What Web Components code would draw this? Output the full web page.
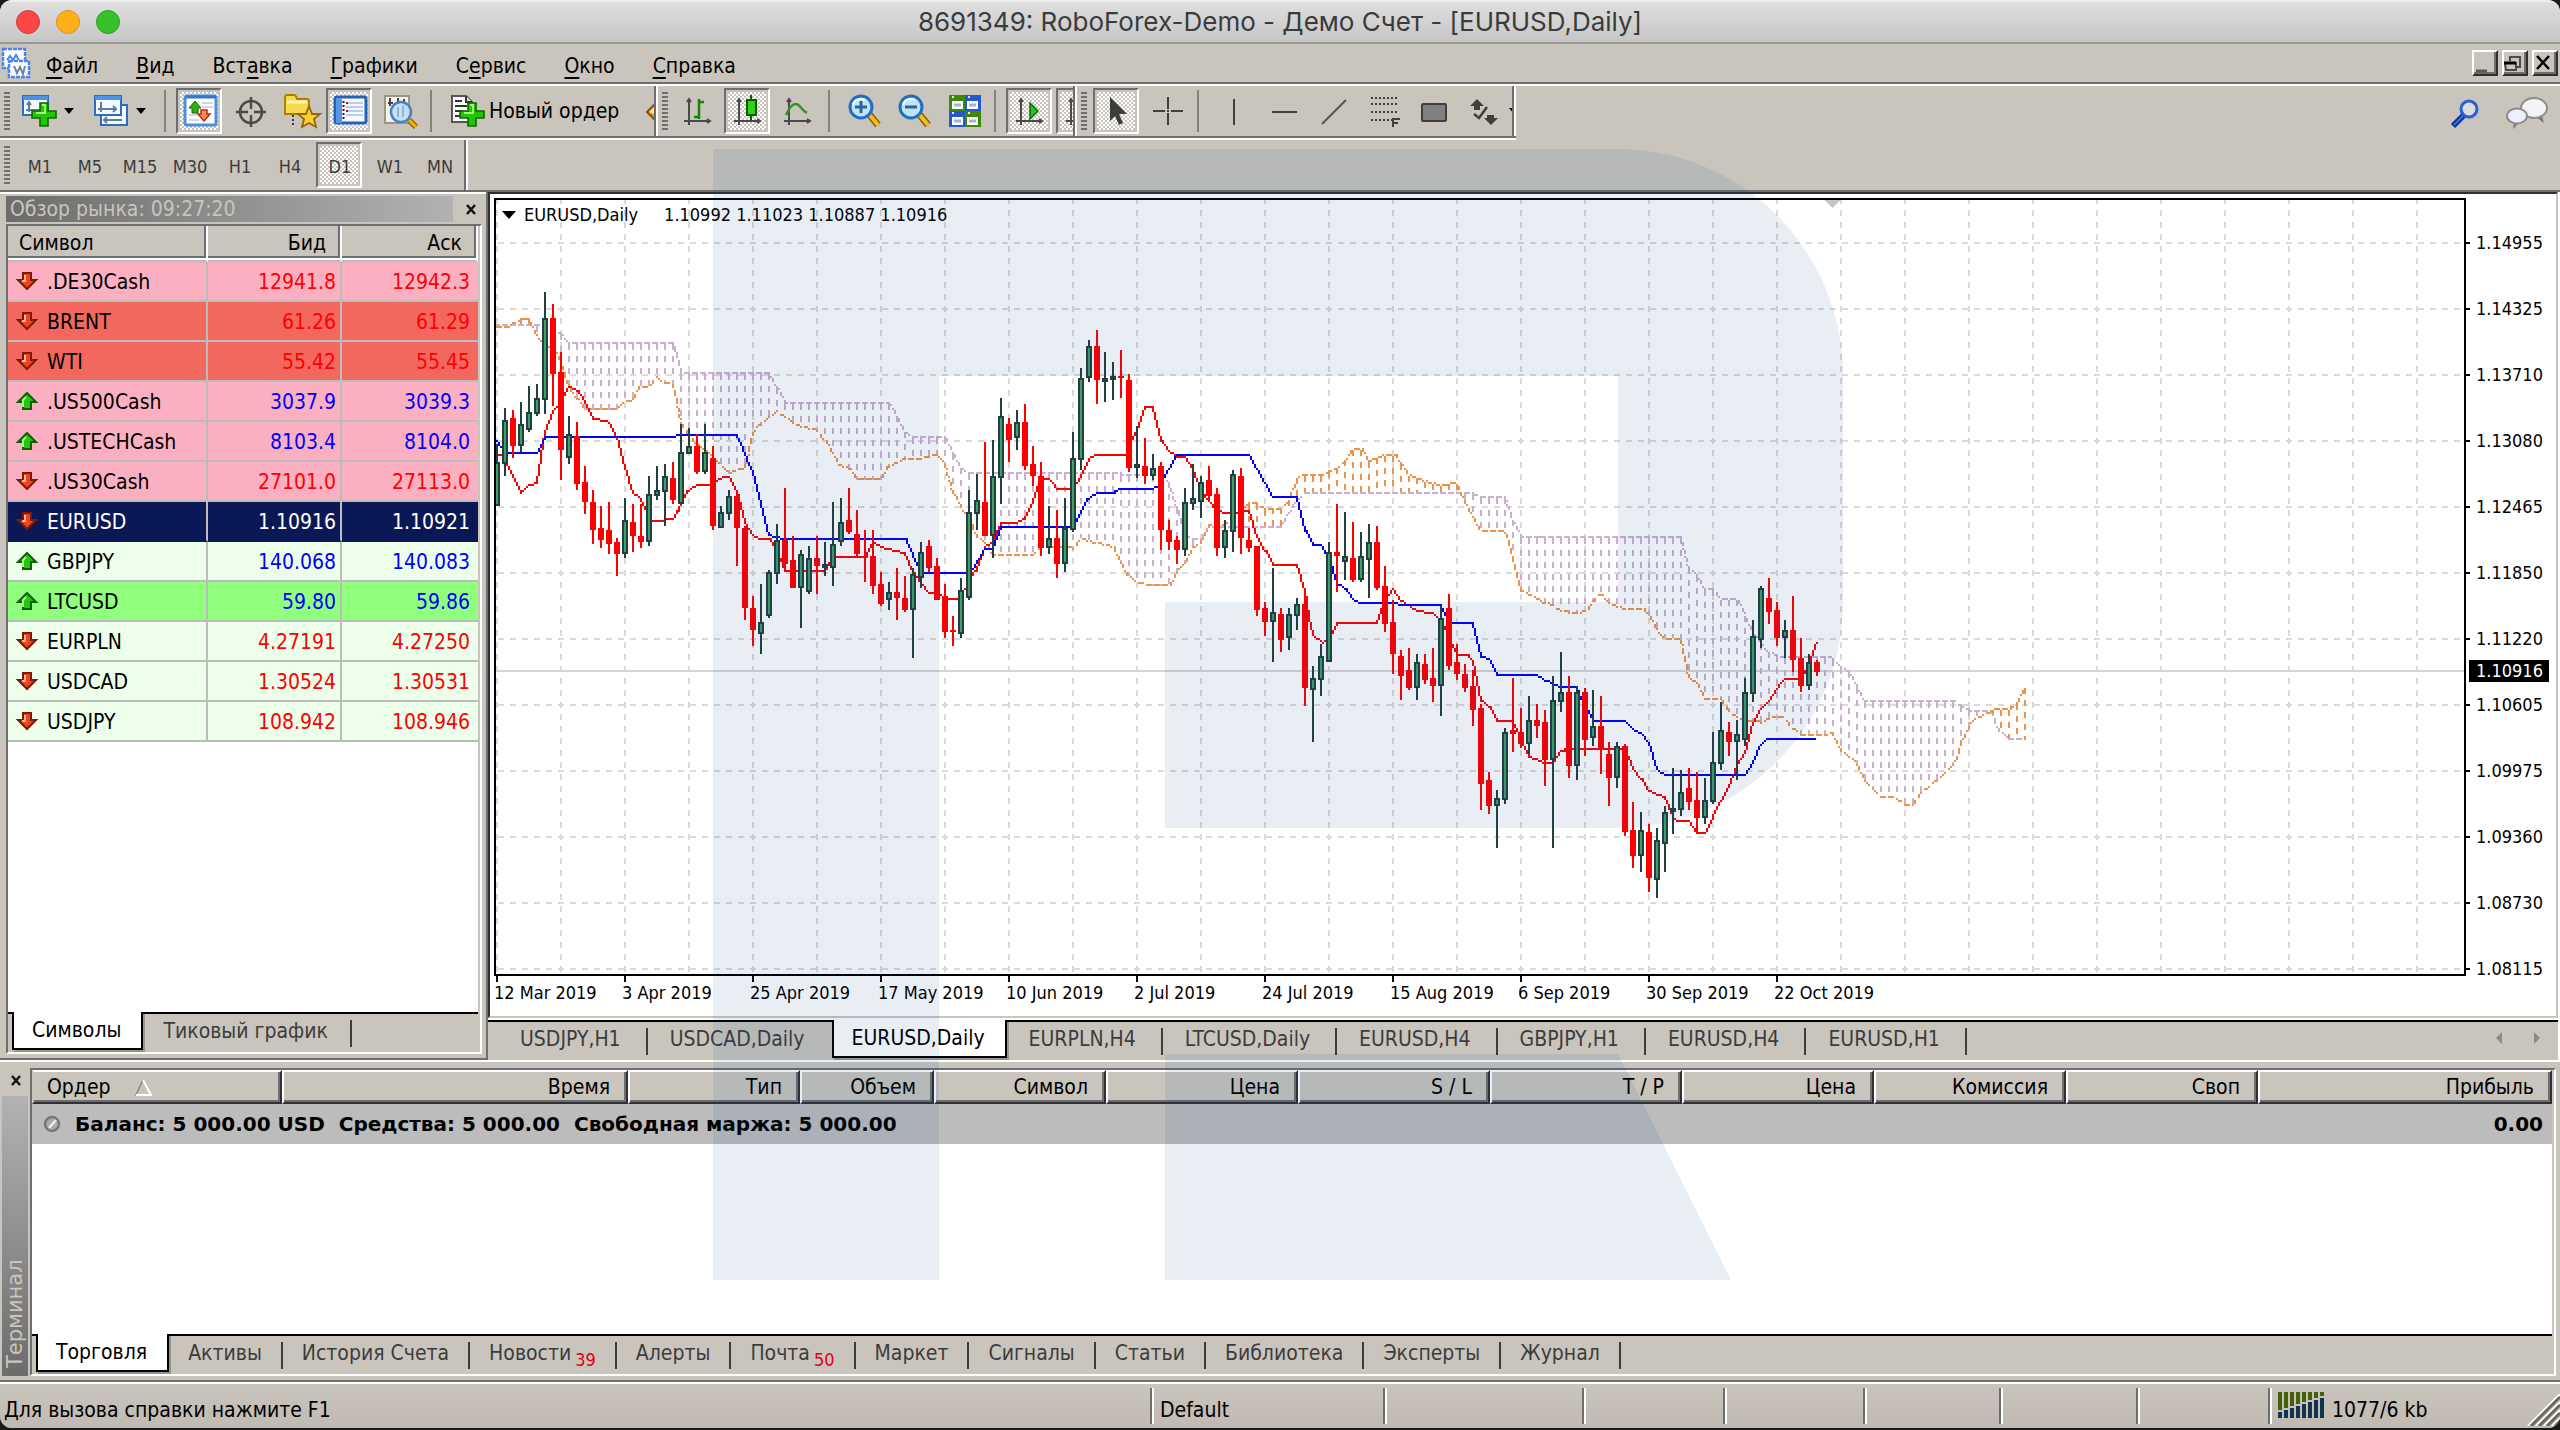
<!DOCTYPE html>
<html lang="ru">
<head>
<meta charset="utf-8">
<title>8691349: RoboForex-Demo - Демо Счет - [EURUSD,Daily]</title>
<style>
:root{
  --face:#c9c4bc; --mid:#6e6e70; --dark:#303032; --line:#bcbcbc; --dim:#3c3c3c;
  --fs:21px; --fs-small:18px;
}
html,body{margin:0;height:100%;background:#1a1a1c}
body{font-family:"DejaVu Sans Condensed","Noto Sans",sans-serif;font-size:var(--fs);line-height:26px;color:#000}
</style>
</head>
<body>
<mt-app></mt-app>
<script>
const RESET = `
*{box-sizing:border-box}
:host{display:block;box-sizing:border-box}
button{font:inherit;color:inherit;background:none;border:0;padding:0;margin:0;cursor:default;white-space:nowrap}
svg{display:block}
`;
function define(name, css, html, init){
  const t = document.createElement('template');
  t.innerHTML = `<style>${RESET}${css}</style>${html}`;
  customElements.define(name, class extends HTMLElement{
    constructor(){
      super();
      this.attachShadow({mode:'open'}).append(t.content.cloneNode(true));
    }
    connectedCallback(){ if(init) init.call(this, this.shadowRoot); }
  });
}

/* ---------- icons ---------- */
const PLUS = '<path d="M18 10h8v8h8v7h-8v8h-8v-8h-8v-7h8z" fill="#23c400" stroke="#0c6b00" stroke-width="1.6"/><path d="M20 12h3v8h-9" fill="none" stroke="#9cf77c" stroke-width="2"/>';
const GLASS = (sign) => `<path d="M21 21l9 11" stroke="#8a5f00" stroke-width="7"/><path d="M21 21l9 11" stroke="#f2c01c" stroke-width="4"/><ellipse cx="13" cy="14" rx="11" ry="11" fill="#bfe3fb" stroke="#1f6fc4" stroke-width="3"/><path d="M5 12a8 7 0 0 1 12-5" stroke="#fff" stroke-width="2" fill="none"/>${sign}`;
const AXES = '<path d="M7 6v26M2 28h26" stroke="#4a4a4a" stroke-width="2" fill="none"/><path d="M5 9l2-3 2 3M25 26l3 2-3 2" fill="none" stroke="#4a4a4a" stroke-width="2"/>';
const ICONS = {
  mdi:'<rect x="1" y="1" width="22" height="19" fill="#fff" stroke="#4d83f0" stroke-width="2.5" stroke-dasharray="4 1"/><path d="M5 12l3-4 3 4 3-5 3 5" stroke="#4d83f0" stroke-width="2" fill="none"/><rect x="7" y="13" width="20" height="16" fill="#fff" stroke="#4d83f0" stroke-width="2.5" stroke-dasharray="4 1"/><path d="M12 18l3 7 3-6 3 7 2-8" stroke="#6c84a8" stroke-width="2" fill="none"/>',
  newchart:'<rect x="1" y="3" width="25" height="19" fill="#f4faff" stroke="#2d6cc0" stroke-width="2"/><rect x="1" y="3" width="25" height="4" fill="#4c92e6"/><path d="M7 9v10M4 17h14M5 12l2-3 2 3" stroke="#5b7d9c" stroke-width="2" fill="none"/>'+PLUS,
  windows:'<rect x="7" y="12" width="26" height="20" fill="#f4faff" stroke="#2d6cc0" stroke-width="2"/><rect x="1" y="3" width="26" height="19" fill="#f4faff" stroke="#2d6cc0" stroke-width="2"/><rect x="1" y="3" width="26" height="4" fill="#4c92e6"/><path d="M7 9v10M4 16h18M19 13l3 3-3 3M10 27h18M13 24l-3 3 3 3" stroke="#5b7d9c" stroke-width="2" fill="none"/>',
  watch:'<rect x="1" y="3" width="31" height="29" rx="2" fill="#fdfdfd" stroke="#4a8fe0" stroke-width="3"/><path d="M2 4h30" stroke="#3577cc" stroke-width="3"/><path d="M18 10h11M18 14h11M5 22h10M5 27h10" stroke="#d5d5d5" stroke-width="2"/><path d="M11 8l6 7h-3v5h-6v-5H5z" fill="#2fae12" stroke="#156b04"/><path d="M20 28l-6-7h3v-4h6v4h3z" fill="#ff8a5c" stroke="#c22d07" stroke-width="1.5"/>',
  cross:'<circle cx="17" cy="19" r="11" fill="none" stroke="#4a4a4a" stroke-width="2.5"/><path d="M17 4v12M17 22v12M2 19h12M20 19h12" stroke="#4a4a4a" stroke-width="2.5"/>',
  navigator:'<path d="M1 4q0-2 2-2h7q2 0 3 4h10q2 0 2 3v12H1z" fill="#f7d94c" stroke="#a87c00" stroke-width="1.8"/><path d="M3 9h20" stroke="#fff4b0" stroke-width="3"/><path d="M9 22v11" stroke="#3a3a3a" stroke-width="2" stroke-dasharray="2 2"/><path d="M25 13l3 8h8l-6 5 2 8-7-4-7 4 2-8-6-5h8z" fill="#f8cf2e" stroke="#97640a" stroke-width="1.8"/>',
  terminal:'<rect x="1" y="4" width="31" height="26" rx="2" fill="#f6f9ff" stroke="#2462b4" stroke-width="3"/><rect x="2" y="5" width="6" height="25" fill="#5796e2"/><path d="M12 10h17M12 14h17M12 18h17M12 22h17" stroke="#a9bcf0" stroke-width="1.5"/><path d="M9.500 8v20" stroke="#222" stroke-width="2" stroke-dasharray="2 2"/><path d="M12 10h2M12 18h2" stroke="#e00000" stroke-width="2"/>',
  tester:'<path d="M1 3h24v27H1z" fill="#f4f2ea" stroke="#9a9584" stroke-width="2"/><path d="M6 5v8M4 10h5M14 5v6M20 6v7" stroke="#444" stroke-width="2"/><path d="M25 27l7 7" stroke="#9a6a00" stroke-width="6"/><path d="M25 27l7 7" stroke="#efb41c" stroke-width="3"/><circle cx="17" cy="19" r="10" fill="#bfe0f8" fill-opacity=".9" stroke="#4a82c0" stroke-width="2.500"/><path d="M14 14v10M19 13v11" stroke="#8fb6d8" stroke-width="2"/>',
  order:'<path d="M2 3h14l6 6v20H2z" fill="#fbfbfb" stroke="#555" stroke-width="2"/><path d="M16 3v6h6" fill="#ddd" stroke="#333" stroke-width="2"/><path d="M5 8h7M5 13h12M5 18h8M5 23h6" stroke="#333" stroke-width="2"/>'+PLUS,
  editor:'<path d="M2 19L14 7l12 12-12 12z" fill="#d9952c" stroke="#8a5500" stroke-width="2"/><path d="M4 19l8-8v6l-4 4z" fill="#ffe0a0"/>',
  bars:AXES+'<path d="M17 6v20M17 9h5M12 24h5" stroke="#15820a" stroke-width="2.500"/>',
  candles:AXES+'<path d="M19 2v26" stroke="#0d5d05" stroke-width="2"/><rect x="15" y="7" width="9" height="15" fill="#2fd31b" stroke="#0d5d05" stroke-width="2"/>',
  line:AXES+'<path d="M4 22C8 14 10 11 14 11c4 0 6 7 11 9" fill="none" stroke="#3b8f2a" stroke-width="2.500"/>',
  zoomin:GLASS('<path d="M13 8v12M7 14h12" stroke="#2b6598" stroke-width="3"/>'),
  zoomout:GLASS('<path d="M7 14h12" stroke="#2b6598" stroke-width="3"/>'),
  tiles:'<rect x="1" y="2" width="16" height="16" fill="#3e8a08"/><rect x="17" y="2" width="16" height="16" fill="#2458cf"/><rect x="1" y="18" width="16" height="16" fill="#2458cf"/><rect x="17" y="18" width="16" height="16" fill="#3e8a08"/><path d="M4 8h11v8H4zM19 8h11v8H19zM4 24h11v8H4zM19 24h11v8H19z" fill="#fff"/><path d="M6 12h7M21 12h7M6 28h7M21 28h7" stroke="#9fb4dd" stroke-width="3"/><path d="M4 4h2M20 4h2M4 20h2M20 20h2" stroke="#dfe9ff" stroke-width="2"/>',
  shift:AXES+'<path d="M16 10l8 8-8 8z" fill="#28c416" stroke="#0d6b05" stroke-width="1.5"/>',
  autoscroll:AXES+'<path d="M16 10l8 8-8 8z" fill="#28c416"/>',
  arrow:'<path d="M9 4v24l5-5 4 9 4-2-4-9h8z" fill="#3d3d3d"/>',
  crosshair:'<path d="M17 4v12M17 20v12M2 18h12M20 18h12" stroke="#3f3f3f" stroke-width="2"/><path d="M16 18h2" stroke="#3f3f3f" stroke-width="2"/>',
  vline:'<path d="M17 6v26" stroke="#3f3f3f" stroke-width="2"/>',
  hline:'<path d="M5 19h25" stroke="#3f3f3f" stroke-width="2"/>',
  trend:'<path d="M5 31L29 7" stroke="#555" stroke-width="2"/>',
  fibo:'<path d="M4 5h26M4 11h26M4 19h26M4 27h22" stroke="#3f3f3f" stroke-width="2" stroke-dasharray="2 2"/><path d="M26 34v-8h7M26 30h5" stroke="#3f3f3f" stroke-width="2" fill="none"/>',
  rect:'<rect x="5" y="11" width="24" height="17" rx="1" fill="#808080" stroke="#3f3f3f" stroke-width="2"/>',
  shapes:'<path d="M10 6l7 7H13v4H7v-4H3zM24 32l-7-7h3v-3h7v3h4z" fill="#3f3f3f"/><path d="M7 21l5 4 8-11" fill="none" stroke="#3f3f3f" stroke-width="2.500"/>',
  search:'<path d="M3 30L14 19" stroke="#0c2f9c" stroke-width="6"/><path d="M4 29L13 20" stroke="#3a74d8" stroke-width="2"/><circle cx="19" cy="13" r="8" fill="#dcdcdc" stroke="#2a5fd6" stroke-width="3"/>',
  chat:'<path d="M36 20l2 7-8-6" fill="#777"/><ellipse cx="28" cy="12" rx="13" ry="10" fill="#f4f4f8" stroke="#8d8d8d" stroke-width="2"/><path d="M8 26l-1 7 6-6" fill="#777"/><ellipse cx="11" cy="20" rx="10" ry="7.500" fill="#eef" stroke="#8d8d8d" stroke-width="2"/>',
  up:'<path d="M13 4l9 9h-5v7H9v-7H4z" fill="#25c412" stroke="#0d5e05" stroke-width="2"/><path d="M12 8l-3 3v7" stroke="#a5f58f" stroke-width="2" fill="none"/>',
  down:'<path d="M13 20L4 11h5V4h8v7h5z" fill="#f4431a" stroke="#7a1c05" stroke-width="2"/><path d="M11 6v6H8" stroke="#ffb9a0" stroke-width="2" fill="none"/>',
  close:'<path d="M2 2l8 9M10 2L2 11" stroke="#111" stroke-width="2.500"/>',
  wmin:'<path d="M4 20h11" stroke="#5d5a52" stroke-width="3"/>',
  wrestore:'<path d="M8 10V6h10v10h-4" fill="none" stroke="#4b4a46" stroke-width="2"/><path d="M3 12h11v7H4z" fill="none" stroke="#4b4a46" stroke-width="2"/><path d="M2 12h12" stroke="#000" stroke-width="3"/>',
  wclose:'<path d="M5 5l12 13M17 5L5 18" stroke="#000" stroke-width="2.500"/>',
  balance:'<circle cx="9" cy="10" r="7" fill="#aaa" stroke="#777" stroke-width="2.500"/><path d="M6 14l7-8" stroke="#ececec" stroke-width="2.500"/>',
  sort:'<path d="M8 2L1 17h15" fill="none" stroke="#8d8a84" stroke-width="1.500"/><path d="M8 2l8 15H1" fill="none" stroke="#fff" stroke-width="2"/>',
};
customElements.define('mt-icon', class extends HTMLElement{
  constructor(){super();this.attachShadow({mode:'open'});}
  connectedCallback(){
    const [w,h] = (this.getAttribute('size')||'34 36').split(' ');
    this.shadowRoot.innerHTML = `<style>:host{display:block;flex:none}svg{display:block;overflow:visible}</style><svg width="${w}" height="${h}" viewBox="0 0 ${w} ${h}" aria-hidden="true">${ICONS[this.getAttribute('name')]}</svg>`;
  }
});

/* ---------- title bar ---------- */
define('mt-title-bar', `
:host{height:44px;display:grid;grid-template-columns:200px 1fr 200px;align-items:center;padding-top:2px;background:linear-gradient(#f4f4f4 0,#dedede 3px,#c6c6c6 42px);border-bottom:2px solid #989898}
.lights{display:flex;gap:16px;padding-left:16px}
.lights button{width:24px;height:24px;border-radius:50%}
.r{background:#fc4648;border:1px solid #dd3436}.y{background:#fdb01a;border:1px solid #dd9411}.g{background:#35c129;border:1px solid #27a01c}
h1{margin:0;text-align:center;font:400 26px/30px Inter,sans-serif;color:#3b3b3b}
`, `<div class="lights"><button class="r" aria-label="Закрыть"></button><button class="y" aria-label="Свернуть"></button><button class="g" aria-label="Развернуть"></button></div><h1><slot></slot></h1>`);

/* ---------- menu ---------- */
define('mt-menu-bar', `
:host{height:42px;display:flex;align-items:center;background:var(--face);border-bottom:2px solid #fff;box-shadow:inset 0 -2px var(--mid);padding:0 2px 2px}
nav{display:flex;gap:38px;padding:6px 0 0 16px;flex:1}
u{text-decoration-thickness:2px;text-underline-offset:4px;text-decoration-skip-ink:none}
.win{display:flex;gap:4px}
.win button{width:26px;height:26px;border:2px solid;border-color:#fff var(--dark) var(--dark) #fff;box-shadow:inset -2px -2px var(--mid)}
.win mt-icon{margin:-2px 0 0 -2px}
`, `<mt-icon name="mdi" size="28 30"></mt-icon>
<nav><button><u>Ф</u>айл</button><button><u>В</u>ид</button><button>Вст<u>а</u>вка</button><button><u>Г</u>рафики</button><button>С<u>е</u>рвис</button><button><u>О</u>кно</button><button><u>С</u>правка</button></nav>
<div class="win"><button aria-label="Свернуть окно"><mt-icon name="wmin" size="22 22"></mt-icon></button><button aria-label="Восстановить окно"><mt-icon name="wrestore" size="22 22"></mt-icon></button><button aria-label="Закрыть окно"><mt-icon name="wclose" size="22 22"></mt-icon></button></div>`);

/* ---------- toolbars ---------- */
define('mt-tool', `
:host{flex:none}
button{display:flex;align-items:center;width:46px;height:46px;padding:0 0 0 8px}
:host([drop]) button{width:68px;padding-left:6px;gap:8px}
:host([drop]) button::after{content:"";border:5px solid transparent;border-top:6px solid #000;border-bottom:0}
:host([drop]) span{display:none}
:host([label]) button{width:auto;padding-right:22px;gap:5px}
:host([pressed]) button,:host([text]) button{border:2px solid transparent}
:host([pressed]) button{border-color:var(--mid) #fff #fff var(--mid);background:repeating-conic-gradient(#fff 0 25%,var(--face) 0 50%) 0 0/4px 4px content-box;padding:2px}
:host([pressed]) mt-icon{margin-left:4px}
:host([text]) button{font-size:var(--fs-small);color:var(--dim)}
:host([text]) button{padding:2px}
:host([text]) span{flex:1;text-align:center;padding:4px 0 0 2px}
`, `<button><span><slot></slot></span></button>`, function(r){
  const n = this.getAttribute('icon');
  const b = r.querySelector('button');
  if(n && !b.querySelector('mt-icon')){
    const i = document.createElement('mt-icon'); i.setAttribute('name', n); b.prepend(i);
    if(this.title) b.setAttribute('aria-label', this.title);
  }
  if(this.hasAttribute('pressed')) b.setAttribute('aria-pressed','true');
});
define('mt-sep', `:host{flex:none;width:2px;height:42px;background:#86827c;margin:0 6px 0 4px}`, ``);
define('mt-band', `
:host{display:flex;align-items:center;gap:4px;height:100%;overflow:hidden;border-right:2px solid var(--mid);flex:none}
i{flex:none;width:6px;height:38px;margin:0 2px 0 4px;background:repeating-linear-gradient(var(--mid) 0 2px,transparent 2px 4px)}
`, `<i></i><slot></slot>`);
define('mt-toolbars', `
:host{background:var(--face)}
.row{display:flex;justify-content:space-between;height:54px}
.bands{display:flex;gap:2px;height:54px;background:#fff;border-bottom:2px solid #fff;box-shadow:inset 0 -2px var(--mid);padding:0 2px 2px 0}
.bands mt-band{background:var(--face)}
.standard{width:656px}.charts{width:417px}.lines{width:437px}
.side{display:flex;gap:22px;padding:8px 12px}
.tf{height:52px;border-bottom:2px solid var(--mid);display:flex}
.tf mt-band{width:466px;box-shadow:2px 0 #fff;overflow:hidden}
.tail{border:6px solid transparent;border-top:7px solid #000;border-bottom:0;flex:none}
`, `<div class="row"><div class="bands">
<mt-band class="standard"><mt-tool icon="newchart" drop title="Новый график"></mt-tool><mt-tool icon="windows" drop title="Профили"></mt-tool><mt-sep></mt-sep><mt-tool icon="watch" pressed title="Обзор рынка"></mt-tool><mt-tool icon="cross" title="Окно данных"></mt-tool><mt-tool icon="navigator" title="Навигатор"></mt-tool><mt-tool icon="terminal" pressed title="Терминал"></mt-tool><mt-tool icon="tester" title="Тестер"></mt-tool><mt-sep></mt-sep><mt-tool icon="order" label>Новый ордер</mt-tool><mt-icon name="editor"></mt-icon></mt-band>
<mt-band class="charts"><mt-tool icon="bars" title="Бары"></mt-tool><mt-tool icon="candles" pressed title="Свечи"></mt-tool><mt-tool icon="line" title="Линия"></mt-tool><mt-sep></mt-sep><mt-tool icon="zoomin" title="Увеличить"></mt-tool><mt-tool icon="zoomout" title="Уменьшить"></mt-tool><mt-tool icon="tiles" title="Мозаика"></mt-tool><mt-sep></mt-sep><mt-tool icon="shift" pressed title="Автопрокрутка"></mt-tool><mt-tool icon="autoscroll" pressed title="Сдвиг"></mt-tool></mt-band>
<mt-band class="lines"><mt-tool icon="arrow" pressed title="Курсор"></mt-tool><mt-tool icon="crosshair" title="Перекрестие"></mt-tool><mt-sep></mt-sep><mt-tool icon="vline" title="Вертикальная линия"></mt-tool><mt-tool icon="hline" title="Горизонтальная линия"></mt-tool><mt-tool icon="trend" title="Трендовая линия"></mt-tool><mt-tool icon="fibo" title="Фибоначчи"></mt-tool><mt-tool icon="rect" title="Прямоугольник"></mt-tool><mt-tool icon="shapes" title="Стрелки"></mt-tool><span class="tail"></span></mt-band>
</div><div class="side"><button aria-label="Поиск"><mt-icon name="search" size="34 34"></mt-icon></button><button aria-label="Чат"><mt-icon name="chat" size="42 34"></mt-icon></button></div></div>
<div class="tf"><mt-band><mt-tool text>M1</mt-tool><mt-tool text>M5</mt-tool><mt-tool text>M15</mt-tool><mt-tool text>M30</mt-tool><mt-tool text>H1</mt-tool><mt-tool text>H4</mt-tool><mt-tool text pressed>D1</mt-tool><mt-tool text>W1</mt-tool><mt-tool text>MN</mt-tool></mt-band></div>`);

/* ---------- tab strip ---------- */
define('mt-tabs', `
:host{display:flex;align-items:flex-start;border-top:2px solid #000;color:var(--dim);padding-left:var(--lead,4px)}
button{position:relative;height:36px;padding:0 var(--after,24px) 2px var(--before,20px)}
button::after{content:"";position:absolute;right:0;top:6px;bottom:3px;width:2px;background:var(--dim)}
button.before::after{content:none}
button[aria-selected=true]{color:#000;background:#fff;border:2px solid #000;border-top:0;margin-top:-2px;height:38px;padding-top:2px;padding-right:20px;padding-left:18px;box-shadow:2px 2px #98958f}
button[aria-selected=true]::after{content:none}
sub{color:#e00016;font-size:var(--fs-small);line-height:0;vertical-align:-6px;margin-left:4px}
.arrows{margin-left:auto;display:flex;gap:32px;padding:10px 18px}
.arrows i{border:6px solid transparent;border-right-color:#8b8b8b;border-left:0}
.arrows i+i{border-right:0;border-left:6px solid #8b8b8b}
`, ``, function(r){
  if(r.querySelector('button')) return;
  const items = this.getAttribute('items').split('|'), on = +this.getAttribute('active');
  items.forEach((t,i)=>{
    const b = document.createElement('button');
    b.setAttribute('role','tab');
    b.setAttribute('aria-selected', i===on);
    if(i===on-1) b.className='before';
    const [label,count] = t.split('#');
    b.textContent = label;
    if(count){const s=document.createElement('sub');s.textContent=count;b.append(s);}
    r.append(b);
  });
  if(this.hasAttribute('arrows')) r.append(Object.assign(document.createElement('div'),{className:'arrows',innerHTML:'<i></i><i></i>'}));
});

/* ---------- market watch ---------- */
const QUOTES = [
['down','.DE30Cash','12941.8','12942.3','pink'],['down','BRENT','61.26','61.29','red'],['down','WTI','55.42','55.45','red'],
['up','.US500Cash','3037.9','3039.3','pink'],['up','.USTECHCash','8103.4','8104.0','pink'],['down','.US30Cash','27101.0','27113.0','pink'],
['down','EURUSD','1.10916','1.10921','sel'],['up','GBPJPY','140.068','140.083','mint'],['up','LTCUSD','59.80','59.86','green'],
['down','EURPLN','4.27191','4.27250','mint'],['down','USDCAD','1.30524','1.30531','mint'],['down','USDJPY','108.942','108.946','mint']];
define('mt-market-watch', `
:host{display:flex;flex-direction:column;width:486px;flex:none;background:var(--face);border-top:2px solid #fff;border-bottom:2px solid var(--mid);padding:2px 4px 4px 6px}
header{display:flex;align-items:center;height:26px;margin-bottom:2px}
h2{flex:1;margin:0 12px 0 0;padding-left:4px;font-size:var(--fs);font-weight:400;line-height:26px;color:var(--face);background:linear-gradient(90deg,#6c6c6c,#b2b2b2)}
header button{margin-right:5px}
.frame{flex:1;display:flex;flex-direction:column;border:2px solid;border-color:var(--mid) #fff #fff var(--mid);padding-right:2px}
.list{flex:1;background:#fff}
table{width:100%;border-collapse:separate;border-spacing:0;table-layout:fixed}
col.a{width:200px}col.b{width:134px}
th{height:36px;padding:0 14px 0 11px;font-weight:400;text-align:right;background:var(--face);border-right:2px solid #fff;border-bottom:2px solid var(--line);box-shadow:inset 0 -2px #fff,inset -2px -4px var(--mid)}
th:first-child{text-align:left}
td{height:40px;padding:2px 4px 0 0;text-align:right;border-bottom:2px solid var(--line);border-right:2px solid var(--line)}
td:last-child{border-right:0;padding-right:8px}
td:first-child{text-align:left;padding:2px 0 0}
.sym{display:flex;align-items:center;gap:7px;padding-left:6px;color:#000}
.sym mt-icon{margin-top:-3px}
tr.down{color:#f00}tr.up{color:#00f}
tr.pink{background:#fab0c0}tr.red{background:#f2685f}tr.mint{background:#edffea}tr.green{background:#90ff7e}
tr.sel{background:#0a1955;color:#fff}tr.sel .sym{color:#fff}tr.sel td{border-bottom-color:#0a1955}
mt-tabs{height:40px}
`, `<header><h2>Обзор рынка: 09:27:20</h2><button aria-label="Закрыть обзор рынка"><mt-icon name="close" size="12 13"></mt-icon></button></header>
<div class="frame"><div class="list"><table><colgroup><col class="a"><col class="b"><col></colgroup><thead><tr><th>Символ</th><th>Бид</th><th>Аск</th></tr></thead><tbody>${QUOTES.map(q=>`<tr class="${q[0]} ${q[4]}"><td><div class="sym"><mt-icon name="${q[0]}" size="26 24"></mt-icon><span>${q[1]}</span></div></td><td>${q[2]}</td><td>${q[3]}</td></tr>`).join('')}</tbody></table></div>
<mt-tabs items="Символы|Тиковый график" active="0"></mt-tabs></div>`);

/* ---------- chart ---------- */
/* Series are kept in blocks: x0,y0 is the block's origin, sx,sy its units per pixel. */
const CANDLES = [
[190,`g760 818 950 950,g655 690 822 857,r660 685 767 803,g636 703 767 785,g588 667 720 725,g582 625 672 678,g306 384 629 672,r342 384 552 648,r486 546 780 870,g678 732 803 822,r696 738 882 899,r828 876 936 972,r900 936 1020 1062,r948 1014 1050 1074,r936 1020 1062 1092,r1044 1056 1092 1158,g924 990 1090 1104,r942 996 1038 1086,r942 1038 1056 1074,g858 912 1056 1068,g828 900 917 930,g822 858 906 1008,r816 864 930 942,g702 786 942 942,g714 768 792 792,r732 768 846 852,g702 786 846 852,r768 804 1008 1020,g948 966 1014 1014,g900 918 972 990,r906 918 1014 1128,r1008 1014 1254 1290,r1218 1254 1320 1368,g1182 1296 1332 1392,g1140 1146 1278 1284,g1002 1050 1152 1182,r894 1050 1122 1140,r1038 1110 1194 1194,g1080 1092 1194 1314,g1068 1104 1206 1212,r1038 1104 1128 1212,g1056 1122 1134 1158,g936 1062 1134 1188,g924 996 1056 1068,r894 990 1026 1032,r960 1032 1092 1098,r1020 1098 1104 1176,r1020 1098 1188 1212,r1146 1182 1242 1248,g1176 1206 1230 1260,r1134 1206 1224 1290,r1158 1224 1260 1266,g1134 1152 1260 1404,g1056 1086 1162 1194,r1050 1068 1134 1146,r1104 1128 1230 1230,r1182 1218 1326 1344,r1278 1320 1326 1368,g1164 1200 1332 1344,g900 966 1224 1230,g852 930 972 1020,r756 936 1038 1038,g750 858 1038 1104,g624 678 864 942,r684 702 750 816,g660 696 744 780,r642 696 828 840,r768 822 858 888,r816 858 1074 1098,g948 1044 1074 1092`],
[300,`r630 714 792 834,g594 684 792 816,g396 474 690 696,g204 234 480 510,g120 138 234 246,r90 138 240 312,g156 234 246 306,g186 228 240 300,r150 228 234 294,r222 240 504 516,g378 492 504 534,r414 498 528 552,g462 504 528 540,r486 498 690 750,r660 690 726 750,r708 720 750 792,g564 606 750 768,g492 594 612 630,g528 546 606 654,r498 540 588 600,r564 582 744 768,g660 690 744 774,g510 522 696 756,r504 528 714 762,r684 720 744 756,r738 738 930 948,r906 924 966 1008,g804 936 966 1086,r924 942 1020 1056,g924 942 1014 1050,g894 912 948 990,r888 912 1164 1218,g1098 1134 1170 1326,g1032 1068 1140 1188,g726 756 1086 1086,r612 756 768 876,g636 768 786 840,r666 774 840 846,g696 768 840 846,g672 726 780 894,r678 726 864 870,r798 858 972 996,r900 966 1062 1122,r1050 1068 1128 1200,r1044 1110 1164 1170,g1062 1086 1164 1200,r1062 1092 1140 1152,r1044 1134 1158 1206,g918 954 1158 1248,r882 924 1098 1110,r1032 1086 1122 1140,r1092 1122 1164 1176,r1110 1158 1230 1278`],
[640,`r192 204 432 510,r396 420 498 522,g450 474 498 624,g264 276 480 492,r114 270 282 336,r204 276 312 324,g168 240 312 342,r192 240 258 294,r210 246 360 438,g108 180 360 624,g36 156 186 216,r108 156 378 414,g138 156 378 420,r144 156 300 348,g150 258 294 318,r168 258 330 402,r306 342 414 498,g306 318 414 444,r312 318 576 588,r486 570 648 684,g516 570 648 696,r552 576 714 756,g564 600 720 774,g498 516 612 696,g384 504 516 582,g390 456 510 528,r384 444 486 510,r396 480 534 576,g414 480 534 552,g276 366 486 492,g186 270 372 390,r246 276 306 348,g240 282 306 420,g114 156 300 318`],
[500,`g360 408 582 606,g258 264 420 444,r234 294 336 372,r306 330 414 438,g360 390 414 474,r288 390 480 516,r414 474 558 576,g462 486 558 570,r480 486 516 528`]];
const A=[490,190,2.8], B=[1050,300,2.8], C=[1430,640,3], D=[1540,500,2.8];
const KIJUN=[[A,'19 752 31 772 42 789 131 789 154 741 519 741 524 735 691 735 736 850 781 1035 826 1047 1164 1047 1207 1149 1341 1149 1352 1137 1386 1077 1408 1077 1430 1011 1566 1011'],
[B,'0 681 64 681 109 595 131 579 180 579 193 567 288 567 311 550 355 465 557 465 624 591 691 591 714 690 736 735 758 735 790 800 803 850 826 865 848 897 871 909 970 909 975 915 1095 915 1107 945 1120 969 1184 969 1207 1068 1229 1078 1251 1125'],
[C,'321 105 345 120 393 141 441 141 453 178 470 210 489 243 585 243 605 268 633 280 657 310 681 388 705 405 945 405 969 370 993 312 1010 297 1158 297']];
const TENKAN=[[A,'19 795 36 795 60 845 87 907 109 884 131 878 154 725 176 660 199 640 221 588 243 600 266 632 288 685 333 697 355 745 378 830 400 910 423 925 440 965 452 993 467 993 512 987 525 960 550 910 580 884 619 884 650 861 669 861 691 905 714 1000 736 1034 758 1046 785 1048 800 1075 826 1143 938 1143 955 1115 970 1101 1050 1101 1072 1056 1095 1070 1162 1090 1184 1145 1207 1180 1229 1209 1251 1212 1270 1220 1285 1227 1310 1227 1333 1190 1360 1140 1386 1068 1408 1058 1430 999 1475 999 1497 985 1520 930 1540 867 1562 867'],
[B,'0 540 20 567 64 567 75 545 109 475 125 465 203 465 213 459 243 390 266 321 288 321 311 420 333 452 355 467 378 470 400 507 423 570 445 600 467 630 490 639 520 639 557 633 580 710 602 750 624 795 691 795 714 870 725 950 736 1005 763 1030 790 1000 803 969 915 969 938 900 960 867 983 900 1027 933 1072 938 1095 960 1117 1010 1139 1065 1170 1066 1184 1080 1207 1200 1229 1217 1251 1263 1296 1263 1310 1300 1341 1370 1364 1377 1386 1389 1408 1389 1430 1354 1450 1347'],
[C,'405 327 560 327 585 321 609 385 633 415 657 453 705 470 729 530 740 542 777 542 801 579 825 579 849 530 873 480 897 440 921 375 945 340 969 250 993 205 1017 180 1063 117 1115 117 1127 90 1140 60 1161 0']];
const SPAN_B=[[A,'17 405 137 405 176 418 199 430 221 459 512 459 520 485 535 549 781 549 803 590 826 639 1117 639 1140 675 1162 725 1184 741 1274 741 1296 790 1318 835 1341 849 1566 849'],
[B,'0 519 195 519 200 525 311 525 333 545 355 625 378 705 400 717 423 717 445 681 646 681 669 640 691 600 714 579 1184 579 1207 591 1274 591 1296 660 1318 711'],
[D,'0 111 394 111 414 200 440 225 460 267 485 268 507 297 552 297 575 345 597 400 620 430 641 455 663 465 685 471 815 471 843 500 870 520 888 560 910 603 1162 603 1184 620 1207 630 1262 633 1285 690 1310 717 1358 717']];
const SPAN_A=[[A,'17 411 50 410 75 392 90 386 109 388 131 440 154 465 176 475 199 520 221 590 243 625 266 657 355 657 378 635 400 630 417 592 445 588 467 560 490 578 512 582 535 700 557 735 580 762 602 780 624 800 646 825 669 849 691 838 714 836 736 730 758 702 781 682 803 662 826 680 848 695 871 709 893 715 915 720 938 750 960 790 978 825 1005 833 1027 867 1095 867 1117 828 1162 808 1207 804 1251 793 1274 825 1296 905 1318 950 1341 985 1363 1040 1386 1055 1408 1095 1520 1095 1542 1075'],
[B,'0 742 64 745 87 715 109 722 131 730 180 741 199 785 221 828 243 849 288 855 335 855 355 820 378 785 400 742 423 730 445 675 490 675 512 660 535 640 557 609 580 609 602 627 646 625 669 600 691 535 714 525 758 525 803 505 826 480 848 447 875 447 893 487 915 470 938 465 970 465 983 490 1005 525 1027 530 1050 542 1095 555 1140 549 1162 610 1184 650 1207 693 1274 693 1290 750 1318 870 1364 895'],
[D,'0 302 36 315 60 332 103 339 131 332 150 300 170 283 193 308 237 327 290 327 305 345 327 390 350 414 394 418 417 535 440 545 462 597 507 597 530 633 552 650 597 662 620 665 650 651 685 653 708 685 730 705 800 705 820 700 843 752 880 780 910 842 955 890 995 892 1022 915 1045 915 1067 880 1112 840 1162 790 1184 715 1207 665 1251 640 1270 627 1315 627 1335 610 1358 565']];
const expand = s => s.flatMap(([[x0,y0,sx],d])=>{const n=d.split(' ').map(Number),o=[];for(let i=0;i<n.length;i+=2)o.push([Math.round(x0+n[i]/sx),Math.round(y0+n[i+1]/3)]);return o;});
const at = (p,x)=>{for(let i=1;i<p.length;i++)if(x<=p[i][0]){const [a,b]=p[i-1],[c,d]=p[i];return c===a?d:b+(d-b)*(x-a)/(c-a);}return p[p.length-1][1];};
const snap = v => Math.round(v/2)*2;
/* polyline drawn as 2px blocks, with an optional on/off rhythm */
const pixels = (p,color,on,off)=>{
  let d='',n=0;
  for(let i=1;i<p.length;i++){
    const [x1,y1]=p[i-1],[x2,y2]=p[i],steps=Math.max(1,Math.round(Math.max(Math.abs(x2-x1),Math.abs(y2-y1))/2));
    for(let s=0;s<steps;s++,n++){
      if(on && n%(on+off)>=on) continue;
      d+=`M${snap(x1-1+(x2-x1)*s/steps)} ${snap(y1-1+(y2-y1)*s/steps)}h2v2h-2z`;
    }
  }
  return `<path d="${d}" fill="${color}"/>`;
};
function plot(){
  const a=expand(SPAN_A), b=expand(SPAN_B);
  let s='';
  for(let x=497;x<=2025;x+=8){
    const ya=snap(at(a,x)), yb=snap(at(b,x)), top=Math.min(ya,yb), h=Math.abs(ya-yb);
    if(h>4) s+=`<path d="M${x} ${top}v${h}" stroke="${ya<yb?'#ec9348':'#cbaed0'}" stroke-width="2" stroke-dasharray="6 6"/>`;
  }
  s+=pixels(b,'#cbaed0',3,1)+pixels(a,'#ec9348',3,1)+pixels(expand(TENKAN),'#f00')+pixels(expand(KIJUN),'#00f');
  let x=497;
  for(const [y0,list] of CANDLES) for(const c of list.split(',')){
    const green=c[0]==='g',[hi,t,o,lo]=c.slice(1).split(' ').map(v=>snap(y0+v/3));
    const col=green?'#243f42':'#f00';
    s+=`<rect x="${x-1}" y="${hi}" width="2" height="${lo-hi}" fill="${col}"/><rect x="${x-3}" y="${t}" width="6" height="${Math.max(2,o-t)}" fill="${col}"/>`;
    if(green&&o-t>4) s+=`<rect x="${x-1}" y="${t+2}" width="2" height="${o-t-4}" fill="#3da062"/>`;
    x+=8;
  }
  return s;
}
const PRICES='1.14955 1.14325 1.13710 1.13080 1.12465 1.11850 1.11220 1.10605 1.09975 1.09360 1.08730 1.08115'.split(' ');
const DATES=['12 Mar 2019','3 Apr 2019','25 Apr 2019','17 May 2019','10 Jun 2019','2 Jul 2019','24 Jul 2019','15 Aug 2019','6 Sep 2019','30 Sep 2019','22 Oct 2019'];
define('mt-chart', `
:host{flex:1;display:grid;grid-template-columns:1fr 90px;grid-template-rows:1fr 40px;background:#fff;border:solid;border-width:2px 2px 2px 2px;border-color:var(--dark) var(--face) var(--face) var(--dark);padding:4px 0 0 4px;font-size:var(--fs-small);line-height:22px}
.plot{position:relative;border:2px solid #000;overflow:hidden;min-width:0}
.plot svg{position:absolute;inset:0;width:100%;height:100%}
.head{position:absolute;left:6px;top:4px;display:flex;align-items:center;gap:8px;white-space:nowrap}
.head i{border:7px solid transparent;border-top:8px solid #000;border-bottom:0}
.head span+span{margin-left:18px}
.prices{grid-row:1/3;grid-column:2;position:relative;padding-top:12px;height:0;min-height:100%}
.prices div{height:66px;display:flex;align-items:center;gap:6px}
.prices div::before{content:"";width:4px;height:2px;background:#000}
.prices b{position:absolute;left:3px;top:462px;padding:0 6px 0 7px;font-weight:400;color:#fff;background:#000}
.dates{display:flex}
.dates span{flex:none;width:128px;white-space:nowrap;padding-top:6px;background:linear-gradient(#000,#000) 2px 0/2px 6px no-repeat}
`, `<div class="plot"><svg shape-rendering="crispEdges" aria-label="EURUSD, Daily"><defs><pattern id="v" width="64" height="12" patternUnits="userSpaceOnUse" y="-2"><rect width="2" height="6" fill="#dadada"/></pattern><pattern id="h" width="12" height="66" patternUnits="userSpaceOnUse" x="2" y="42"><rect width="6" height="2" fill="#dadada"/></pattern></defs><rect width="100%" height="100%" fill="url(#v)"/><rect width="100%" height="100%" fill="url(#h)"/><rect y="470" width="100%" height="2" fill="#d6d6d6"/><path d="M1328 0h16l-8 8z" fill="#c4c4c4"/><g transform="translate(-496 -200)">${plot()}</g></svg>
<div class="head"><i></i><span>EURUSD,Daily</span><span>1.10992 1.11023 1.10887 1.10916</span></div></div>
<div class="prices">${PRICES.map(p=>`<div>${p}</div>`).join('')}<b>1.10916</b></div>
<div class="dates">${DATES.map(p=>`<span>${p}</span>`).join('')}</div>`);

/* ---------- terminal ---------- */
define('mt-terminal', `
:host{display:flex;height:322px;flex:none;background:var(--face);border-top:2px solid #fff;border-bottom:2px solid var(--mid);padding:6px 4px 4px 2px}
aside{width:28px;display:flex;flex-direction:column}
aside button{padding:0 8px 3px;height:28px}
h2{flex:1;margin:0 2px 0 0;writing-mode:vertical-rl;transform:rotate(180deg);font:400 var(--fs)/26px "DejaVu Sans",sans-serif;padding-top:8px;color:var(--face);background:linear-gradient(#6c6c6c,#b2b2b2)}
.frame{flex:1;display:flex;flex-direction:column;border:2px solid;border-color:var(--mid) #fff #fff var(--mid);padding-right:2px;min-width:0}
.list{flex:1;background:#fff}
table{width:100%;table-layout:fixed;border-collapse:separate;border-spacing:0}
th{height:34px;font-weight:400;text-align:right;padding:0 16px 0 13px;background:var(--face);border:2px solid;border-color:#fff var(--dark) var(--dark) #fff;box-shadow:inset -2px -2px var(--mid)}
th:first-child{text-align:left;border-left-color:var(--face)}
th div{display:flex;gap:24px;align-items:center}
td{height:40px;background:#bcbcbc;font:700 20px/26px "DejaVu Sans",sans-serif;text-align:right;padding:0 9px}
td:first-child{text-align:left;white-space:pre}
td div{display:flex;gap:10px;align-items:center;padding-left:2px}
mt-tabs{--lead:4px;--before:19px;--after:21px;height:40px}
`, `<aside><button aria-label="Закрыть терминал"><mt-icon name="close" size="12 13"></mt-icon></button><h2>Терминал</h2></aside>
<div class="frame"><div class="list"><table><colgroup>${[250,346,172,134,172,192,192,192,192,192,192].map(w=>`<col style="width:${w}px">`).join('')}<col></colgroup>
<thead><tr><th><div>Ордер <mt-icon name="sort" size="18 18"></mt-icon></div></th>${['Время','Тип','Объем','Символ','Цена','S / L','T / P','Цена','Комиссия','Своп','Прибыль'].map(t=>`<th>${t}</th>`).join('')}</tr></thead>
<tbody><tr><td colspan="11"><div><mt-icon name="balance" size="22 20"></mt-icon><span>Баланс: 5 000.00 USD  Средства: 5 000.00  Свободная маржа: 5 000.00</span></div></td><td>0.00</td></tr></tbody></table></div>
<mt-tabs items="Торговля|Активы|История Счета|Новости#39|Алерты|Почта#50|Маркет|Сигналы|Статьи|Библиотека|Эксперты|Журнал" active="0"></mt-tabs></div>`);

/* ---------- status bar ---------- */
define('mt-status', `
:host{height:46px;flex:none;display:flex;align-items:center;background:linear-gradient(#c9c4bc,#c0bab2);border-top:2px solid #fff;position:relative}
span{height:36px;display:flex;align-items:center;gap:8px;padding:8px 0 0 8px;border-left:2px solid var(--mid);box-shadow:inset 2px 0 #fff;flex:none}
span.hint{flex:1;border:0;box-shadow:none;padding-left:4px}
svg.grip{position:absolute;right:0;bottom:2px}
`, `<span class="hint">Для вызова справки нажмите F1</span><span style="width:233px">Default</span><span style="width:199px"></span><span style="width:141px"></span><span style="width:140px"></span><span style="width:136px"></span><span style="width:137px"></span><span style="width:132px"></span><span style="width:292px"><svg width="46" height="28" viewBox="0 0 46 28" style="margin-top:-8px">${[0,1,2,3,4,5,6,7].map(i=>`<rect x="${i*6}" y="0" width="4" height="${18-i*2}" fill="#46600a"/><rect x="${i*6}" y="${20-i*2}" width="4" height="${6+i*2}" fill="#12344f"/>`).join('')}</svg>1077/6 kb</span>
<svg class="grip" width="34" height="32" viewBox="0 0 34 32"><path d="M2 32L34 0M10 32L34 8M18 32L34 16M26 32L34 24" stroke="#fff" stroke-width="2"/><path d="M5 32L34 3M13 32L34 11M21 32L34 19M29 32L34 27" stroke="#6a675f" stroke-width="3"/></svg>`);

/* ---------- application shell ---------- */
define('mt-app', `
:host{position:relative;display:flex;flex-direction:column;height:calc(100vh - 2px);min-height:900px;overflow:hidden;border-radius:12px;background:var(--face)}
main{flex:1;display:flex;min-height:0}
.work{flex:1;display:flex;flex-direction:column;border-left:2px solid var(--mid);border-right:2px solid #fff;min-width:0}
.work mt-tabs{height:40px;--lead:10px;--before:22px;--after:27px;margin-top:2px;box-shadow:0 -2px #fff;flex:none}
.mark{position:absolute;left:0;top:0;pointer-events:none}
`, `<mt-title-bar>8691349: RoboForex-Demo - Демо Счет - [EURUSD,Daily]</mt-title-bar>
<mt-menu-bar></mt-menu-bar><mt-toolbars></mt-toolbars>
<main><mt-market-watch></mt-market-watch><div class="work"><mt-chart></mt-chart><mt-tabs arrows items="USDJPY,H1|USDCAD,Daily|EURUSD,Daily|EURPLN,H4|LTCUSD,Daily|EURUSD,H4|GBPJPY,H1|EURUSD,H4|EURUSD,H1" active="2"></mt-tabs></div></main>
<mt-terminal></mt-terminal><mt-status></mt-status>
<svg class="mark" width="2560" height="1430" viewBox="0 0 2560 1430" aria-hidden="true"><path d="M713 149H1617A226 226 0 0 1 1843 375V602A226 226 0 0 1 1617 828H1165V602H1618V376H939V1280H713ZM1165 1054H1618L1731 1280H1165Z" fill="rgb(10,66,144)" fill-opacity=".09"/></svg>`);
</script>
</body>
</html>
